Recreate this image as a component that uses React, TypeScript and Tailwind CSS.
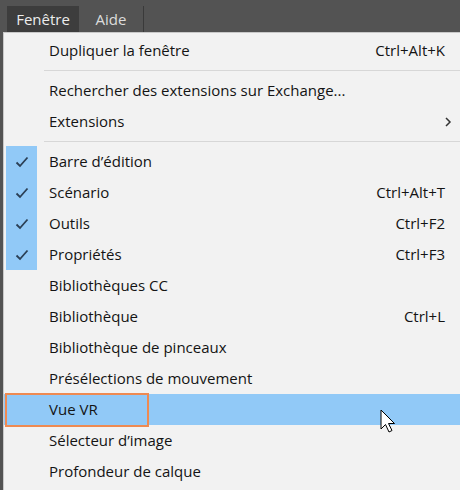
import React from "react";

type Item = {
  label: string;
  shortcut?: string;
  checked?: boolean;
  sub?: boolean;
  hover?: boolean;
  sepAfter?: boolean;
};

const items: Item[] = [
  { label: "Dupliquer la fenêtre", shortcut: "Ctrl+Alt+K", sepAfter: true },
  { label: "Rechercher des extensions sur Exchange..." },
  { label: "Extensions", sub: true, sepAfter: true },
  { label: "Barre d’édition", checked: true },
  { label: "Scénario", shortcut: "Ctrl+Alt+T", checked: true },
  { label: "Outils", shortcut: "Ctrl+F2", checked: true },
  { label: "Propriétés", shortcut: "Ctrl+F3", checked: true },
  { label: "Bibliothèques CC" },
  { label: "Bibliothèque", shortcut: "Ctrl+L" },
  { label: "Bibliothèque de pinceaux" },
  { label: "Présélections de mouvement" },
  { label: "Vue VR", hover: true },
  { label: "Sélecteur d’image" },
  { label: "Profondeur de calque", sepAfter: true },
];

function Check() {
  return (
    <svg width="14" height="12" viewBox="0 0 14 12" fill="none">
      <path d="M1.5 6.5 L5 10 L12.5 1.5" stroke="#2b3f55" strokeWidth="1.8" />
    </svg>
  );
}

function Cursor() {
  return (
    <svg width="20" height="28" viewBox="0 0 20 28" className="absolute left-[376px] top-[15px]">
      <path
        d="M1 1 L1 20 L5.5 15.5 L9 23 L12 21.5 L8.5 14.5 L14.5 14.5 Z"
        fill="#fff"
        stroke="#000"
        strokeWidth="1"
        strokeLinejoin="round"
      />
    </svg>
  );
}

function Row({ item }: { item: Item }) {
  return (
    <>
      <div
        className={`relative flex h-[31px] items-center ${item.hover ? "bg-[#91c9f7]" : ""}`}
      >
        <div
          className={`flex h-full w-[31px] ml-[2px] items-center justify-center ${
            item.checked ? "bg-[#91c9f7]" : ""
          }`}
        >
          {item.checked && <Check />}
        </div>
        <span className="ml-[12px] flex-1 text-[#141414]">{item.label}</span>
        {item.shortcut && <span className="mr-[15px] text-[#141414]">{item.shortcut}</span>}
        {item.sub && (
          <svg width="8" height="12" viewBox="0 0 8 12" className="mr-[8px]">
            <path d="M2 2 L6 6 L2 10" stroke="#333" strokeWidth="1.5" fill="none" />
          </svg>
        )}
        {item.hover && (
          <>
            <div className="pointer-events-none absolute left-[1px] top-[-1px] h-[34px] w-[144px] border-2 border-[#ee8a52]" />
            <Cursor />
          </>
        )}
      </div>
      {item.sepAfter && (
        <div className="flex h-[9px] items-center pl-[40px]">
          <div className="h-px w-full bg-[#d7d7d7]" />
        </div>
      )}
    </>
  );
}

export default function App() {
  return (
    <div
      className="h-[490px] w-[460px] overflow-hidden bg-[#535353] text-[15px]"
      style={{ fontFamily: '"Open Sans", "Noto Sans", sans-serif' }}
    >
      <div className="flex h-[32px] items-end">
        <div className="ml-[7px] flex h-[26px] w-[72px] items-center justify-center bg-[#3d3d3d] text-[#ececec]">
          Fenêtre
        </div>
        <div className="flex h-[26px] w-[64px] items-center justify-center text-[#dcdcdc]">
          Aide
        </div>
        <div className="h-[26px] w-px bg-[#3a3a3a]" />
      </div>
      <div className="ml-[3px] h-[458px] border-l border-t border-[#c9c9c9] bg-[#f2f2f2] pt-[2px]">
        {items.map((it) => (
          <Row key={it.label} item={it} />
        ))}
      </div>
    </div>
  );
}
